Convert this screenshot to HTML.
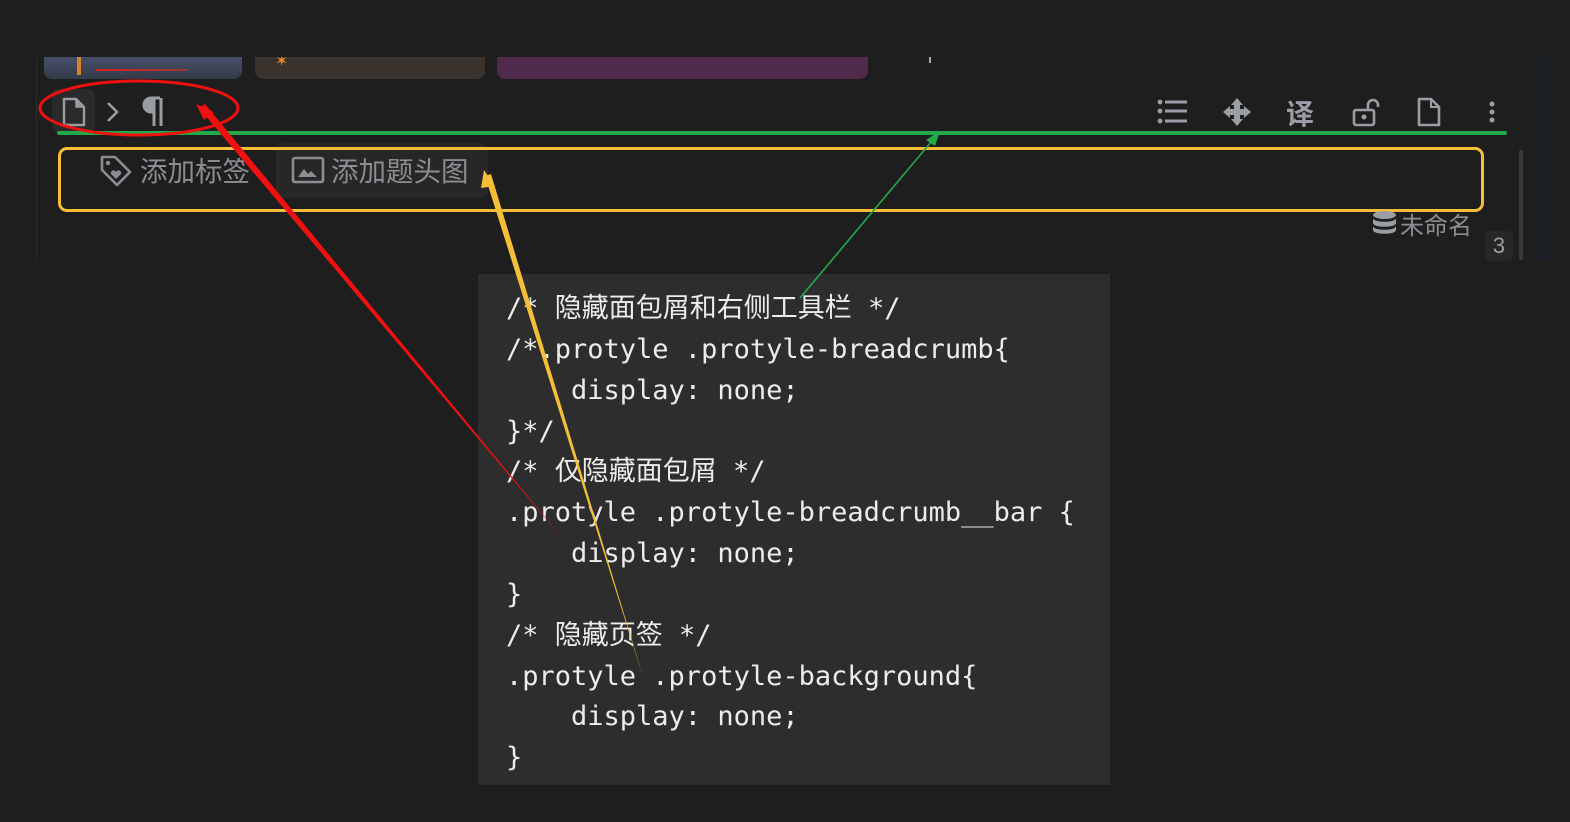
<!DOCTYPE html>
<html><head><meta charset="utf-8"><style>
html,body{margin:0;padding:0;}
body{width:1570px;height:822px;background:#1e1e1e;position:relative;overflow:hidden;font-family:"Liberation Sans","Noto Sans CJK SC",sans-serif;}
.abs{position:absolute;}
.tab{position:absolute;top:40px;height:39px;border-radius:0 0 8px 8px;overflow:hidden;}
.code{position:absolute;left:478px;top:274px;width:632px;height:511px;background:#2d2d2d;}
.code pre{margin:0;position:absolute;left:28px;top:15px;font-family:"DejaVu Sans Mono","Noto Sans CJK SC",monospace;font-size:27px;line-height:40.85px;color:#ececec;}
.ic{position:absolute;color:#9a9ea4;}
.lbl{color:#8a8d92;font-size:27.5px;font-family:"Liberation Sans","Noto Sans CJK SC",sans-serif;}
</style></head><body>
<div class="abs" style="left:0;top:0;width:1570px;height:57px;background:#1e1e1e;"></div>
<div class="tab" style="left:44px;width:198px;background:linear-gradient(#46506a,#333a47);top:57px;height:22px;">
 <div class="abs" style="left:52px;top:12px;width:92px;height:2px;background:linear-gradient(90deg,#d22,#933);"></div>
 <div class="abs" style="left:33px;top:0;width:4px;height:18px;background:#d9822b;"></div>
</div>
<div class="tab" style="left:255px;width:230px;background:#3a322c;top:57px;height:22px;">
 <div class="abs" style="left:20px;top:0;color:#e8891d;font-size:16px;line-height:10px;">✶</div>
</div>
<div class="tab" style="left:497px;width:371px;background:#4f2a4b;top:57px;height:22px;"></div>
<div class="abs" style="left:929px;top:57px;width:2px;height:6px;background:#aaa;"></div>
<div class="abs" style="left:36px;top:57px;width:1px;height:203px;background:#2c2c2c;"></div>
<div class="abs" style="left:1532px;top:57px;width:15px;height:203px;background:#1c1f25;"></div>
<div class="abs" style="left:1519px;top:150px;width:4px;height:110px;background:#3a3a3a;border-radius:2px;"></div>

<div class="abs" style="left:52px;top:89px;width:43px;height:44px;background:#2a2a2a;border-radius:7px;"></div>
<svg class="abs" style="left:60px;top:97px" width="28" height="30" viewBox="0 0 28 30"><path d="M4 2h12l8 8v18H4z" fill="none" stroke="#9a9ea4" stroke-width="2.4" stroke-linejoin="round"/><path d="M16 2v8h8" fill="#9a9ea4" stroke="#9a9ea4" stroke-width="1.5"/></svg>
<svg class="abs" style="left:105px;top:100px" width="16" height="24"><path d="M3 3l9 9-9 9" fill="none" stroke="#9a9ea4" stroke-width="2.6"/></svg>
<svg class="abs" style="left:140px;top:96px" width="28" height="32" viewBox="0 0 28 32"><path d="M20 2H11a7 7 0 0 0 0 14h3" fill="none" stroke="#9a9ea4" stroke-width="3"/><path d="M14 2v28M21 2v28" stroke="#9a9ea4" stroke-width="3"/><path d="M11 2a7 7 0 0 0 0 14h3V2z" fill="#9a9ea4"/></svg>

<svg class="abs" style="left:1157px;top:98px" width="32" height="28"><g fill="#9a9ea4"><circle cx="3" cy="4" r="2.4"/><circle cx="3" cy="13" r="2.4"/><circle cx="3" cy="23" r="2.4"/><rect x="8" y="2.5" width="22" height="3"/><rect x="8" y="11.5" width="22" height="3"/><rect x="8" y="21.5" width="22" height="3"/></g></svg>
<svg class="abs" style="left:1222px;top:97px" width="30" height="30" viewBox="0 0 30 30"><g fill="#9a9ea4"><path d="M15 1l6 7h-12z"/><path d="M15 29l6-7h-12z"/><path d="M1 15l7-6v12z"/><path d="M29 15l-7-6v12z"/><rect x="12" y="8" width="6" height="14"/><rect x="8" y="12" width="14" height="6"/></g></svg>
<div class="ic" style="left:1286px;top:93px;font-size:28px;font-weight:bold;font-family:'Noto Sans CJK SC',sans-serif;">译</div>
<svg class="abs" style="left:1352px;top:97px" width="30" height="30" viewBox="0 0 30 30"><rect x="2" y="13" width="20" height="15" rx="2" fill="none" stroke="#9a9ea4" stroke-width="2.6"/><path d="M16 13V8a5 5 0 0 1 10 0v2" fill="none" stroke="#9a9ea4" stroke-width="2.6"/><circle cx="12" cy="20" r="2.5" fill="#9a9ea4"/></svg>
<svg class="abs" style="left:1416px;top:97px" width="26" height="30" viewBox="0 0 26 30"><path d="M3 2h12l8 8v18H3z" fill="none" stroke="#9a9ea4" stroke-width="2.6" stroke-linejoin="round"/><path d="M15 2v8h8" fill="none" stroke="#9a9ea4" stroke-width="2"/></svg>
<svg class="abs" style="left:1488px;top:101px" width="8" height="22"><g fill="#9a9ea4"><circle cx="4" cy="3" r="2.5"/><circle cx="4" cy="11" r="2.5"/><circle cx="4" cy="19" r="2.5"/></g></svg>

<div class="abs" style="left:57px;top:131px;width:1450px;height:4px;background:#22a94a;border-radius:2px;"></div>

<div class="abs" style="left:276px;top:143px;width:212px;height:55px;background:#272727;border-radius:8px;"></div>
<svg class="abs" style="left:98px;top:153px" width="36" height="36" viewBox="0 0 36 36"><path d="M4 4h13l15 15-13 13L4 17z" fill="none" stroke="#8a8d92" stroke-width="2.6" stroke-linejoin="round"/><circle cx="10" cy="10" r="2.2" fill="#8a8d92"/><path d="M18 26l-5-5a2.5 2.5 0 0 1 5-2 2.5 2.5 0 0 1 5 2z" fill="#8a8d92"/></svg>
<div class="abs lbl" style="left:140px;top:149px;">添加标签</div>
<svg class="abs" style="left:291px;top:156px" width="34" height="28" viewBox="0 0 34 28"><rect x="2" y="2" width="30" height="24" rx="2" fill="none" stroke="#8a8d92" stroke-width="2.6"/><path d="M7 21l6-8 4 5 3-3 6 6z" fill="#8a8d92"/></svg>
<div class="abs lbl" style="left:331px;top:149px;">添加题头图</div>

<div class="abs" style="left:58px;top:147px;width:1420px;height:59px;border:3px solid #f4bf37;border-radius:9px;"></div>

<svg class="abs" style="left:1372px;top:210px" width="25" height="25" viewBox="0 0 25 25"><g fill="#9a9ea4"><ellipse cx="12.5" cy="5" rx="11.5" ry="4"/><path d="M1 8c0 5 23 5 23 0v5c0 5-23 5-23 0z"/><path d="M1 16c0 5 23 5 23 0v4c0 5-23 5-23 0z"/></g></svg>
<div class="abs" style="left:1400px;top:206px;color:#8a8d92;font-size:24px;">未命名</div>
<div class="abs" style="left:1485px;top:231px;width:28px;height:30px;background:#272727;border-radius:6px;color:#9a9ea4;font-size:22px;text-align:center;line-height:30px;">3</div>

<div class="code"><pre>/* 隐藏面包屑和右侧工具栏 */
/*.protyle .protyle-breadcrumb{
    display: none;
}*/
/* 仅隐藏面包屑 */
.protyle .protyle-breadcrumb__bar {
    display: none;
}
/* 隐藏页签 */
.protyle .protyle-background{
    display: none;
}</pre></div>

<svg class="abs" style="left:0;top:0" width="1570" height="822">
 <ellipse cx="139" cy="108" rx="99" ry="27" fill="none" stroke="#f01010" stroke-width="3"/>
 <polygon points="199,108 568,545 205,104" fill="#f01010"/>
 <polygon points="196,104 214,112 204,120" fill="#f01010"/>
 <polygon points="485,176 644,680 491,174" fill="#f4bf37"/>
 <polygon points="484,170 495,186 481,188" fill="#f4bf37"/>
 <line x1="937" y1="135" x2="800" y2="298" stroke="#22a94a" stroke-width="1.6"/>
 <polygon points="940,131 935,146 926,140" fill="#22a94a"/>
</svg>
</body></html>
